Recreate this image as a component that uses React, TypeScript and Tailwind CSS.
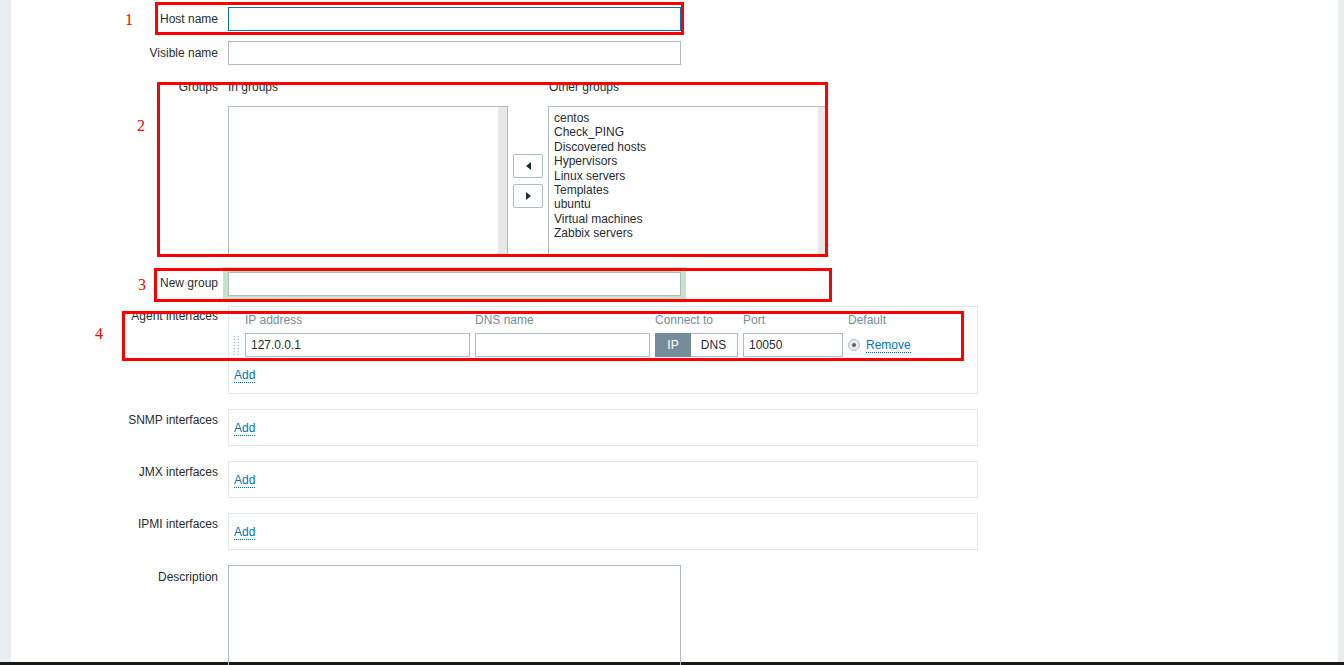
import * as React from "react";

const otherGroups = [
  "centos",
  "Check_PING",
  "Discovered hosts",
  "Hypervisors",
  "Linux servers",
  "Templates",
  "ubuntu",
  "Virtual machines",
  "Zabbix servers",
];

function Row({
  label,
  className = "",
  labelClass = "pt-[4px]",
  children,
}: {
  label: string;
  className?: string;
  labelClass?: string;
  children: React.ReactNode;
}) {
  return (
    <div className={`flex ${className}`}>
      <div className={`w-[207px] shrink-0 text-right leading-[14px] ${labelClass}`}>{label}</div>
      <div className="ml-[10px]">{children}</div>
    </div>
  );
}

function AddLink() {
  return (
    <div className="flex">
      <span className="border-b border-dotted border-[#0275b8] leading-[14px] text-[#0275b8]">Add</span>
    </div>
  );
}

function Listbox({ items = [] as string[] }) {
  return (
    <div className="flex h-[150px] w-[280px] border border-[#acbbc4] bg-white">
      <div className="flex-1 pl-[5px] pt-[4px]">
        {items.map((g) => (
          <div key={g} className="leading-[14.4px]">
            {g}
          </div>
        ))}
      </div>
      <div className="w-[9px] bg-[#e8e8e8]" />
    </div>
  );
}

function ArrowButton({ dir }: { dir: "left" | "right" }) {
  return (
    <button className="flex h-[24px] w-[30px] items-center justify-center rounded-[2px] border border-[#acbbc4] bg-white">
      <svg width="5" height="8" viewBox="0 0 5 8">
        {dir === "left" ? (
          <polygon points="5,0 5,8 0,4" fill="#1f2c33" />
        ) : (
          <polygon points="0,0 0,8 5,4" fill="#1f2c33" />
        )}
      </svg>
    </button>
  );
}

function InterfaceBox() {
  return (
    <div className="w-[750px] border border-[#e3e8ea] pb-[9px] pl-[5px] pt-[11px]">
      <AddLink />
    </div>
  );
}

function Annotation({ className }: { className: string }) {
  return <div className={`pointer-events-none absolute border-[3px] border-[#ff0000] ${className}`} />;
}

function Num({ n, className }: { n: string; className: string }) {
  return (
    <span
      className={`absolute font-['Liberation_Serif',serif] text-[16px] leading-none text-[#ff0000] ${className}`}
    >
      {n}
    </span>
  );
}

export default function App() {
  return (
    <div className="relative h-[665px] overflow-hidden bg-white font-['Liberation_Sans',Arial,sans-serif] text-[12px] text-[#1f2c33]">
      <div className="flex h-[662px]">
        <div className="w-[11px] shrink-0 bg-[#ebeef0]" />
        <div className="flex-1 pt-[7px]">
          <Row label="Host name" labelClass="pt-[5px]">
            <input className="block h-[24px] w-[453px] border border-[#0275b8] px-[5px] outline-none" />
          </Row>

          <Row label="Visible name" className="mt-[10px]" labelClass="pt-[5px]">
            <input className="block h-[24px] w-[453px] border border-[#acbbc4] px-[5px] outline-none" />
          </Row>

          <Row label="Groups" className="mt-[15px]" labelClass="pt-0">
            <div className="flex">
              <div>
                <div className="mb-[12px] leading-[14px]">In groups</div>
                <Listbox />
              </div>
              <div className="mt-[26px] flex h-[150px] w-[40px] flex-col items-center justify-center gap-[6px]">
                <ArrowButton dir="left" />
                <ArrowButton dir="right" />
              </div>
              <div>
                <div className="mb-[12px] pl-[1px] leading-[14px]">Other groups</div>
                <Listbox items={otherGroups} />
              </div>
            </div>
          </Row>

          <Row label="New group" className="mt-[16px]">
            <div className="-m-[5px] bg-[#c8e2c8] p-[5px]">
              <input className="block h-[24px] w-[453px] border border-[#acbbc4] bg-white px-[5px] outline-none" />
            </div>
          </Row>

          <Row label="Agent interfaces" className="mt-[10px]" labelClass="pt-[3px]">
            <div className="w-[750px] border border-[#e3e8ea] pb-[10px] pl-[5px] pt-[6px]">
              <div className="grid grid-cols-[6px_225px_175px_83px_100px_auto] items-center gap-x-[5px] gap-y-[6px] text-[#768d99]">
                <div />
                <div className="leading-[14px]">IP address</div>
                <div className="leading-[14px]">DNS name</div>
                <div className="leading-[14px]">Connect to</div>
                <div className="leading-[14px]">Port</div>
                <div className="leading-[14px]">Default</div>

                <svg width="6" height="19" viewBox="0 0 6 19" className="-ml-[1px]">
                  {[0, 3, 6, 9, 12, 15, 18].map((y) =>
                    [0, 4].map((x) => (
                      <rect key={`${x}-${y}`} x={x + 0.5} y={y} width="1.5" height="1.2" fill="#acbbc4" />
                    ))
                  )}
                </svg>
                <input
                  defaultValue="127.0.0.1"
                  className="block h-[24px] w-[225px] border border-[#acbbc4] px-[5px] text-[#1f2c33] outline-none"
                />
                <input className="block h-[24px] w-[175px] border border-[#acbbc4] px-[5px] outline-none" />
                <div className="flex h-[24px] w-[83px] border border-[#acbbc4]">
                  <div className="-m-[1px] flex w-[36px] items-center justify-center bg-[#768d99] text-white">IP</div>
                  <div className="flex flex-1 items-center justify-center text-[#1f2c33]">DNS</div>
                </div>
                <input
                  defaultValue="10050"
                  className="block h-[24px] w-[100px] border border-[#acbbc4] px-[5px] text-[#1f2c33] outline-none"
                />
                <div className="flex items-center gap-[6px]">
                  <span className="flex h-[12px] w-[12px] items-center justify-center rounded-full border border-[#b5bfc4] bg-[#e8eaeb]">
                    <span className="h-[4px] w-[4px] rounded-full bg-[#59636a]" />
                  </span>
                  <span className="border-b border-dotted border-[#0275b8] leading-[14px] text-[#0275b8]">Remove</span>
                </div>
              </div>
              <div className="mt-[11px]">
                <AddLink />
              </div>
            </div>
          </Row>

          <Row label="SNMP interfaces" className="mt-[15px]">
            <InterfaceBox />
          </Row>

          <Row label="JMX interfaces" className="mt-[15px]">
            <InterfaceBox />
          </Row>

          <Row label="IPMI interfaces" className="mt-[15px]">
            <InterfaceBox />
          </Row>

          <Row label="Description" className="mt-[15px]" labelClass="pt-[5px]">
            <textarea className="block h-[140px] w-[453px] resize-none border border-[#acbbc4] outline-none" />
          </Row>
        </div>
        <div className="w-[6px] shrink-0 bg-[#ebeef0]" />
      </div>
      <div className="h-[3px] bg-[#1b1916]" />

      <Annotation className="left-[155px] top-[2px] h-[33px] w-[529px]" />
      <Annotation className="left-[157px] top-[82px] h-[175px] w-[671px]" />
      <Annotation className="left-[154px] top-[268px] h-[34px] w-[678px]" />
      <Annotation className="left-[122px] top-[311px] h-[50px] w-[842px]" />

      <Num n="1" className="left-[125px] top-[12px]" />
      <Num n="2" className="left-[137px] top-[118px]" />
      <Num n="3" className="left-[138px] top-[277px]" />
      <Num n="4" className="left-[95px] top-[326px]" />
    </div>
  );
}
